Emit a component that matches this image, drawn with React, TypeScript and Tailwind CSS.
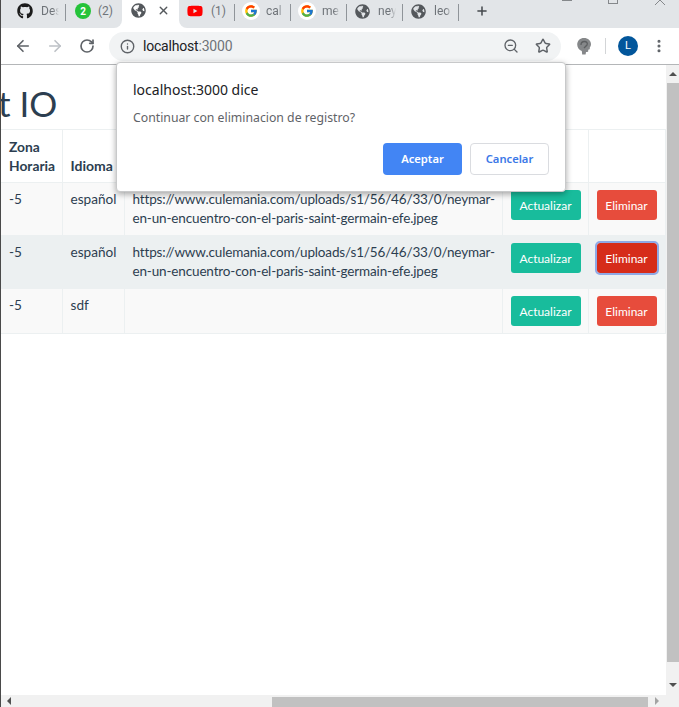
import { ArrowLeft, ArrowRight, Info, MoreVertical, Plus, RotateCw, Star, X, ZoomOut } from 'lucide-react';
import type { ReactNode } from 'react';
import { FaGithub, FaGlobeAmericas, FaYoutube } from 'react-icons/fa';
import { FcGoogle } from 'react-icons/fc';

const IMG_URL =
  'https://www.culemania.com/uploads/s1/56/46/33/0/neymar-en-un-encuentro-con-el-paris-saint-germain-efe.jpeg';

const ROWS = [
  { idioma: 'español', url: IMG_URL, tint: 'bg-[#f9f9f9]', h: 'h-[53px]', active: false },
  { idioma: 'español', url: IMG_URL, tint: 'bg-[#ecf0f1]', h: 'h-[53px]', active: true },
  { idioma: 'sdf', url: '', tint: 'bg-[#f9f9f9]', h: 'h-[45px]', active: false },
];

function Tab({ icon, label, pad = 'pl-[7px]', sep = true }: { icon: ReactNode; label: string; pad?: string; sep?: boolean }) {
  return (
    <div className={`relative flex h-7 w-[56px] shrink-0 items-start pt-[2px] ${pad}`}>
      <span className="flex h-[18px] w-[17px] shrink-0 items-center justify-center">{icon}</span>
      <span className="ml-[7px] w-[18px] overflow-hidden whitespace-nowrap text-[12px] leading-[18px] text-[#6f7479] [mask-image:linear-gradient(to_right,black_65%,transparent)]">
        {label}
      </span>
      {sep ? <span className="absolute right-0 top-[4px] h-[17px] w-px bg-[#8f9499]" /> : null}
    </div>
  );
}

function Globe() {
  return <FaGlobeAmericas className="h-[15px] w-[15px] text-[#54585c]" />;
}

function GoogleIcon() {
  return (
    <span className="flex h-[18px] w-[18px] shrink-0 items-center justify-center rounded-full bg-white">
      <FcGoogle className="h-[14px] w-[14px]" />
    </span>
  );
}

function TabStrip() {
  return (
    <div className="relative flex h-7 shrink-0 bg-white">
      <div className="flex shrink-0 rounded-br-[8px] bg-[#e2e5e8]">
        <div className="relative flex h-7 w-[65px] shrink-0 items-start pl-[16px] pt-[2px]">
          <span className="flex h-[18px] items-center">
            <FaGithub className="h-[16px] w-[16px] text-[#1b1b1b]" />
          </span>
          <span className="ml-[8px] w-[18px] overflow-hidden whitespace-nowrap text-[12px] leading-[18px] text-[#6f7479] [mask-image:linear-gradient(to_right,black_65%,transparent)]">
            Des
          </span>
          <span className="absolute right-0 top-[4px] h-[17px] w-px bg-[#8f9499]" />
        </div>
        <div className="flex h-7 w-[56px] shrink-0 items-start pl-[9px] pt-[3px]">
          <span className="flex h-[16px] w-[16px] items-center justify-center rounded-full bg-[#25c33a] text-[10px] font-bold text-white">
            2
          </span>
          <span className="ml-[7px] mt-[-1px] text-[12px] leading-[18px] text-[#6f7479]">(2)</span>
        </div>
      </div>
      <div className="flex h-7 w-[57px] shrink-0 items-start bg-white pl-[9px] pt-[3px]">
        <Globe />
        <X className="ml-[11px] mt-px h-[13px] w-[13px] text-[#55595d]" strokeWidth={2.5} />
      </div>
      <div className="flex min-w-0 flex-1 rounded-bl-[8px] bg-[#e2e5e8]">
        <div className="relative flex h-7 w-[56px] shrink-0 items-start pl-[8px] pt-[2px]">
          <span className="flex h-[18px] items-center">
            <FaYoutube className="h-[16px] w-[16px] text-[#f00]" />
          </span>
          <span className="ml-[8px] text-[12px] leading-[18px] text-[#6f7479]">(1)</span>
          <span className="absolute right-0 top-[4px] h-[17px] w-px bg-[#8f9499]" />
        </div>
        <Tab icon={<GoogleIcon />} label="cal" />
        <Tab icon={<GoogleIcon />} label="me" />
        <Tab icon={<Globe />} label="ney" />
        <Tab icon={<Globe />} label="leo" />
        <Plus className="ml-[16px] mt-[4px] h-[14px] w-[14px] text-[#45494d]" strokeWidth={2.6} />
      </div>
      <WindowControls />
    </div>
  );
}

function WindowControls() {
  return (
    <div className="absolute right-0 top-0 flex h-[5px] w-[120px] items-start overflow-hidden">
      <span className="ml-[3px] mt-0 h-px w-[10px] bg-[#85888b]" />
      <span className="ml-[36px] mt-[-6px] h-[10px] w-[10px] border border-[#85888b]" />
      <svg className="ml-[36px] mt-[-6px] shrink-0" width="12" height="12" viewBox="0 0 12 12">
        <path d="M1 11 L6 6 L11 11" fill="none" stroke="#85888b" strokeWidth="1" />
      </svg>
    </div>
  );
}

function Toolbar() {
  return (
    <div className="flex h-[37px] shrink-0 items-center border-b border-[#b4b6b8] bg-white">
      <ArrowLeft className="ml-[13px] h-[18px] w-[18px] text-[#5f6368]" strokeWidth={2.2} />
      <ArrowRight className="ml-[14px] h-[18px] w-[18px] text-[#bdc1c6]" strokeWidth={2.2} />
      <RotateCw className="ml-[15px] h-[16px] w-[16px] text-[#5f6368]" strokeWidth={2.5} />
      <div className="ml-[14px] flex h-[29px] w-[452px] items-center rounded-full bg-[#f1f3f4]">
        <Info className="ml-[11px] h-[15px] w-[15px] text-[#5f6368]" strokeWidth={2.2} />
        <span className="ml-[8px] text-[14px] tracking-[-0.2px] text-[#202124]">
          localhost<span className="text-[#6f7479]">:3000</span>
        </span>
        <ZoomOut className="ml-auto h-[16px] w-[16px] text-[#5f6368]" strokeWidth={2} />
        <Star className="ml-[16px] mr-[10px] h-[16px] w-[16px] text-[#5f6368]" strokeWidth={2.2} />
      </div>
      <svg className="ml-[15px]" width="16" height="18" viewBox="0 0 16 18">
        <path
          d="M8 1c4 0 7 2.600 7 6.300 0 1.200-.4 2.200-1.200 3.200v1.800l-1.600.4v1.800c-.6.400-1.400.6-2.200.6l-.4 2.400H6.200l-.4-3.500C3 12.800 1.200 10.400 1.200 7.500 1.200 3.700 4.200 1 8 1z"
          fill="#858789"
        />
        <path d="M5 8c0-2 1.500-3.500 3.500-3.500S12 6 11 8l-3 3" fill="none" stroke="#5c5e60" strokeWidth="1.300" />
      </svg>
      <span className="ml-[13px] h-[16px] w-px bg-[#d3d5d7]" />
      <span className="ml-[12px] flex h-[20px] w-[20px] items-center justify-center rounded-full bg-[#02569b] text-[11px] text-white">
        L
      </span>
      <MoreVertical className="ml-[13px] h-[16px] w-[16px] text-[#5f6368]" strokeWidth={2.6} />
    </div>
  );
}

function Dialog() {
  return (
    <div className="absolute left-[115px] top-[-3px] z-10 h-[130px] w-[450px] rounded-[4px] border border-[#c8c9ca] bg-white pl-[16px] pr-[16px] shadow-[0_2px_6px_rgba(0,0,0,0.35)] [font-family:'Noto_Sans','Open_Sans',sans-serif]">
      <p className="mt-[17px] text-[14px] leading-[20px] text-[#202124]">localhost:3000 dice</p>
      <p className="mt-[9px] text-[12.250px] leading-[18px] text-[#5f6368]">Continuar con eliminacion de registro?</p>
      <div className="mt-[16px] flex justify-end gap-[8px]">
        <button type="button" className="h-[32px] w-[79px] rounded-[4px] bg-[#4285f4] text-[11.200px] font-semibold text-white">
          Aceptar
        </button>
        <button
          type="button"
          className="h-[32px] w-[79px] rounded-[4px] border border-[#dadce0] bg-white text-[11.200px] font-semibold text-[#3b78e7]"
        >
          Cancelar
        </button>
      </div>
    </div>
  );
}

function ActionButton({ kind, active }: { kind: 'update' | 'delete'; active?: boolean }) {
  if (kind === 'update') {
    return (
      <button type="button" className="h-[30px] w-[70px] rounded-[3px] bg-[#18bc9c] text-[12px] text-white">
        Actualizar
      </button>
    );
  }
  return (
    <button
      type="button"
      className={`h-[30px] w-[60px] rounded-[3px] text-[12px] text-white ${
        active ? 'bg-[#d62c1a] outline-2 outline-[#8fa9e6]' : 'bg-[#e74c3c]'
      }`}
    >
      Eliminar
    </button>
  );
}

function DataTable() {
  return (
    <table className="w-[664px] table-fixed border-collapse text-[14px] leading-[19px] text-[#2c3e50]">
      <colgroup>
        <col className="w-[61px]" />
        <col className="w-[62px]" />
        <col className="w-[378px]" />
        <col className="w-[86px]" />
        <col className="w-[77px]" />
      </colgroup>
      <thead>
        <tr className="h-[53px] border-y border-[#ecf0f1]">
          <th className="border-r border-[#ecf0f1] pb-[7px] pl-[8px] pt-[6px] text-left align-bottom text-[13.800px] font-bold">
            Zona
            <br />
            Horaria
          </th>
          <th className="border-r border-[#ecf0f1] pb-[7px] pl-[8px] text-left align-bottom font-bold">Idioma</th>
          <th className="border-r border-[#ecf0f1]" />
          <th className="border-r border-[#ecf0f1]" />
          <th className="border-r border-[#ecf0f1]" />
        </tr>
      </thead>
      <tbody>
        {ROWS.map((row, i) => (
          <tr key={i} className={`border-b border-[#ecf0f1] ${row.tint} ${row.h}`}>
            <td className="border-r border-[#ecf0f1] pl-[8px] pt-[7px] align-top text-[13.600px]">-5</td>
            <td className="border-r border-[#ecf0f1] pl-[8px] pt-[7px] align-top text-[13.600px]">{row.idioma}</td>
            <td className="border-r border-[#ecf0f1] pb-[7px] pl-[8px] pr-[6px] pt-[7px] align-top text-[13.500px] tracking-[-0.150px]">
              {row.url}
            </td>
            <td className="border-r border-[#ecf0f1] pl-[8px] pt-[7px] align-top">
              <ActionButton kind="update" />
            </td>
            <td className="border-r border-[#ecf0f1] pl-[8px] pt-[7px] align-top">
              <ActionButton kind="delete" active={row.active} />
            </td>
          </tr>
        ))}
      </tbody>
    </table>
  );
}

function VerticalScrollbar() {
  return (
    <div className="flex w-[13px] shrink-0 flex-col items-center bg-[#f1f1f1]">
      <span className="mt-[7px] h-0 w-0 border-x-[4px] border-b-[4px] border-x-transparent border-b-[#505050]" />
      <div className="mt-[7px] h-[579px] w-[12px] self-end bg-[#c1c1c1]" />
      <span className="mt-[21px] h-0 w-0 border-x-[4px] border-t-[4px] border-x-transparent border-t-[#505050]" />
    </div>
  );
}

function HorizontalScrollbar() {
  return (
    <div className="flex h-[12px] shrink-0 items-center bg-[#f1f1f1]">
      <span className="ml-[6px] h-0 w-0 border-y-[4px] border-r-[4px] border-y-transparent border-r-[#505050]" />
      <div className="ml-[261px] mt-[2px] h-[10px] w-[376px] bg-[#c1c1c1]" />
      <span className="ml-[7px] h-0 w-0 border-y-[4px] border-l-[4px] border-y-transparent border-l-[#a3a3a3]" />
    </div>
  );
}

export default function App() {
  return (
    <div className="flex h-[707px] w-[679px] flex-col overflow-hidden border-l border-[#4a4a4a] bg-white [font-family:'Roboto','Liberation_Sans',sans-serif]">
      <TabStrip />
      <Toolbar />
      <div className="relative flex min-h-0 flex-1">
        <div className="min-w-0 flex-1 overflow-hidden [font-family:'Lato',sans-serif]">
          <h1 className="ml-[-3px] mt-[12px] h-[52px] text-[35px] leading-[52px] text-[#2c3e50]">t IO</h1>
          <DataTable />
        </div>
        <VerticalScrollbar />
        <Dialog />
      </div>
      <HorizontalScrollbar />
    </div>
  );
}
